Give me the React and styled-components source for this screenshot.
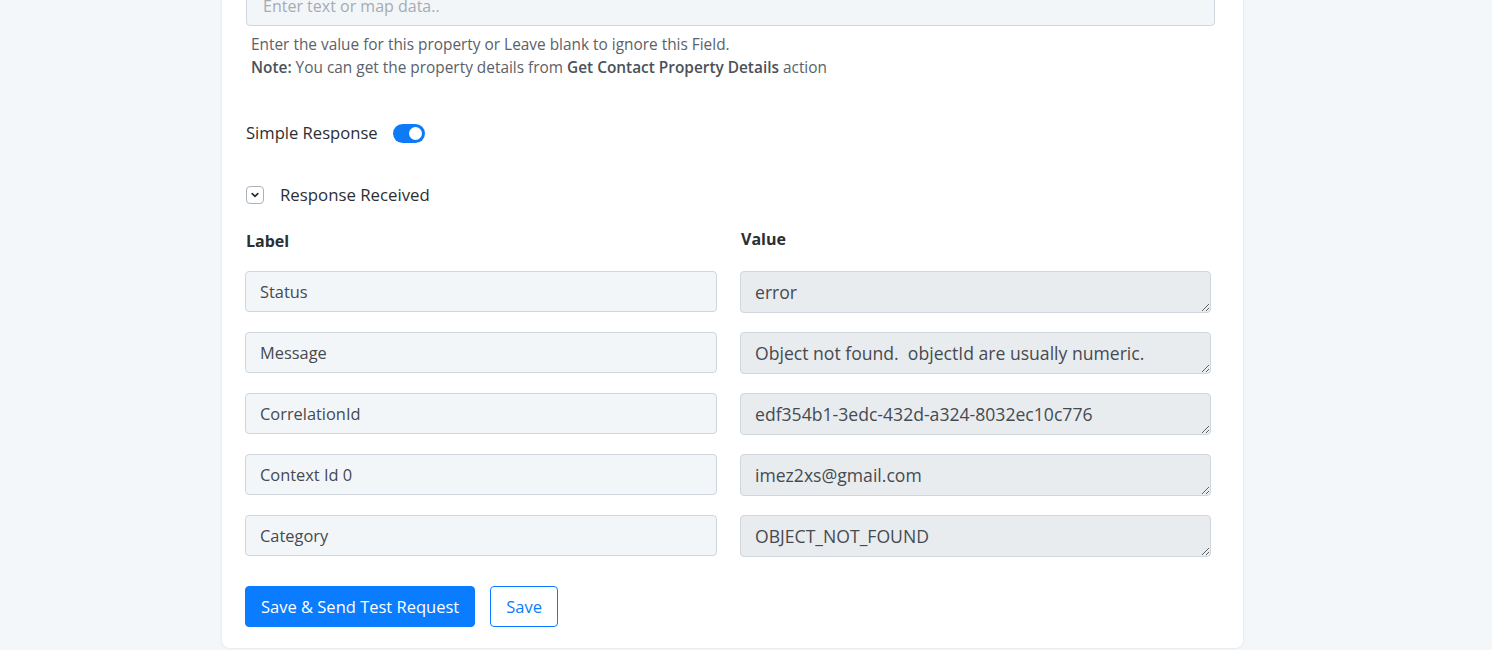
import React, { useState } from "react";
import styled, { createGlobalStyle } from "styled-components";

const GlobalStyle = createGlobalStyle`
  html, body {
    margin: 0;
    padding: 0;
    background: #f4f7fa;
    font-family: "Open Sans", Lato, sans-serif;
    overflow: hidden;
  }
`;

const Page = styled.div`
  width: 100%;
  height: 650px;
  display: flex;
  padding-left: 222px;
  box-sizing: border-box;
  overflow: hidden;
`;

const Card = styled.div`
  width: 1021px;
  margin-top: -14px;
  height: 662px;
  background: #fff;
  border-radius: 0 0 8px 8px;
  box-shadow: 0 0 3px rgba(0, 0, 0, 0.1);
  padding: 0 29px 0 23px;
  box-sizing: border-box;
  display: flex;
  flex-direction: column;
`;

const TextInput = styled.input`
  width: 100%;
  height: 40px;
  box-sizing: border-box;
  border: 1px solid #cfd6de;
  border-radius: 4px;
  background: #f3f6f9;
  padding: 0 16px;
  font-family: inherit;
  font-size: 16px;
  color: #444;
  margin-left: 1px;
  &::placeholder {
    color: #a6abb1;
  }
`;

const Help = styled.div`
  margin: 7px 0 0 6px;
  font-size: 15.4px;
  line-height: 23px;
  color: #5b6168;
  b {
    font-weight: 600;
    color: #4b5158;
  }
`;

const ToggleRow = styled.div`
  display: flex;
  align-items: center;
  gap: 15px;
  margin: 43px 0 0 1px;
  font-size: 16.6px;
  line-height: 22px;
  color: #2b2f33;
`;

const Switch = styled.button`
  width: 32px;
  height: 19px;
  border-radius: 10px;
  border: none;
  padding: 0;
  background: ${(p) => (p.on ? "#0d7bf7" : "#c7ced6")};
  position: relative;
  cursor: pointer;
  &::after {
    content: "";
    position: absolute;
    top: 3px;
    left: ${(p) => (p.on ? "16px" : "3px")};
    width: 13px;
    height: 13px;
    border-radius: 50%;
    background: #fff;
  }
`;

const Collapse = styled.div`
  display: flex;
  align-items: center;
  gap: 16px;
  margin: 40px 0 0 1px;
  font-size: 16.8px;
  line-height: 22px;
  color: #2b2f33;
`;

const ChevronBox = styled.span`
  width: 18px;
  height: 18px;
  box-sizing: border-box;
  border: 1px solid #aab2bb;
  border-radius: 4px;
  display: flex;
  align-items: center;
  justify-content: center;
`;

const Grid = styled.div`
  display: grid;
  grid-template-columns: 472px 471px;
  column-gap: 23px;
  row-gap: 19px;
  margin-top: 22px;
`;

const Head = styled.div`
  font-size: 16px;
  line-height: 22px;
  font-weight: 700;
  color: #2b2f33;
  margin-left: 1px;
  margin-top: ${(p) => (p.up ? "0" : "2px")};
  margin-bottom: ${(p) => (p.up ? "2px" : "0")};
`;

const LabelBox = styled.div`
  height: 41px;
  box-sizing: border-box;
  border: 1px solid #cfd6de;
  border-radius: 4px;
  background: #f3f6f9;
  padding: 0 14px;
  display: flex;
  align-items: center;
  font-size: 16.4px;
  color: #454a50;
`;

const ValueBox = styled.textarea`
  height: 42px;
  box-sizing: border-box;
  border: 1px solid #cfd6de;
  border-radius: 4px;
  background: #e9ecef;
  padding: 9px 14px;
  font-family: inherit;
  font-size: 17.6px;
  line-height: 22px;
  color: #454a50;
  resize: vertical;
  overflow: hidden;
`;

const Actions = styled.div`
  display: flex;
  gap: 15px;
  margin-top: 29px;
`;

const Button = styled.button`
  height: 41px;
  box-sizing: border-box;
  padding: 0 15px;
  border-radius: 4px;
  font-family: inherit;
  font-size: 16.5px;
  cursor: pointer;
  border: 1px solid #0a7cff;
  background: ${(p) => (p.primary ? "#0a7cff" : "#fff")};
  color: ${(p) => (p.primary ? "#fff" : "#0a7cff")};
`;

const rows = [
  ["Status", "error"],
  ["Message", "Object not found.  objectId are usually numeric."],
  ["CorrelationId", "edf354b1-3edc-432d-a324-8032ec10c776"],
  ["Context Id 0", "imez2xs@gmail.com"],
  ["Category", "OBJECT_NOT_FOUND"],
];

export default function App() {
  const [simple, setSimple] = useState(true);

  return (
    <Page>
      <GlobalStyle />
      <Card>
        <TextInput placeholder="Enter text or map data.." />
        <Help>
          Enter the value for this property or Leave blank to ignore this Field.
          <br />
          <b>Note:</b> You can get the property details from{" "}
          <b>Get Contact Property Details</b> action
        </Help>

        <ToggleRow>
          Simple Response
          <Switch on={simple ? 1 : 0} onClick={() => setSimple(!simple)} />
        </ToggleRow>

        <Collapse>
          <ChevronBox>
            <svg width="10" height="10" viewBox="0 0 10 10">
              <path
                d="M2.2 3.6 L5 6.4 L7.8 3.6"
                fill="none"
                stroke="#2b2f33"
                strokeWidth="1.7"
                strokeLinecap="round"
                strokeLinejoin="round"
              />
            </svg>
          </ChevronBox>
          Response Received
        </Collapse>

        <Grid>
          <Head>Label</Head>
          <Head up>Value</Head>
          {rows.map(([label, value]) => (
            <React.Fragment key={label}>
              <LabelBox>{label}</LabelBox>
              <ValueBox readOnly value={value} />
            </React.Fragment>
          ))}
        </Grid>

        <Actions>
          <Button primary>Save &amp; Send Test Request</Button>
          <Button>Save</Button>
        </Actions>
      </Card>
    </Page>
  );
}
